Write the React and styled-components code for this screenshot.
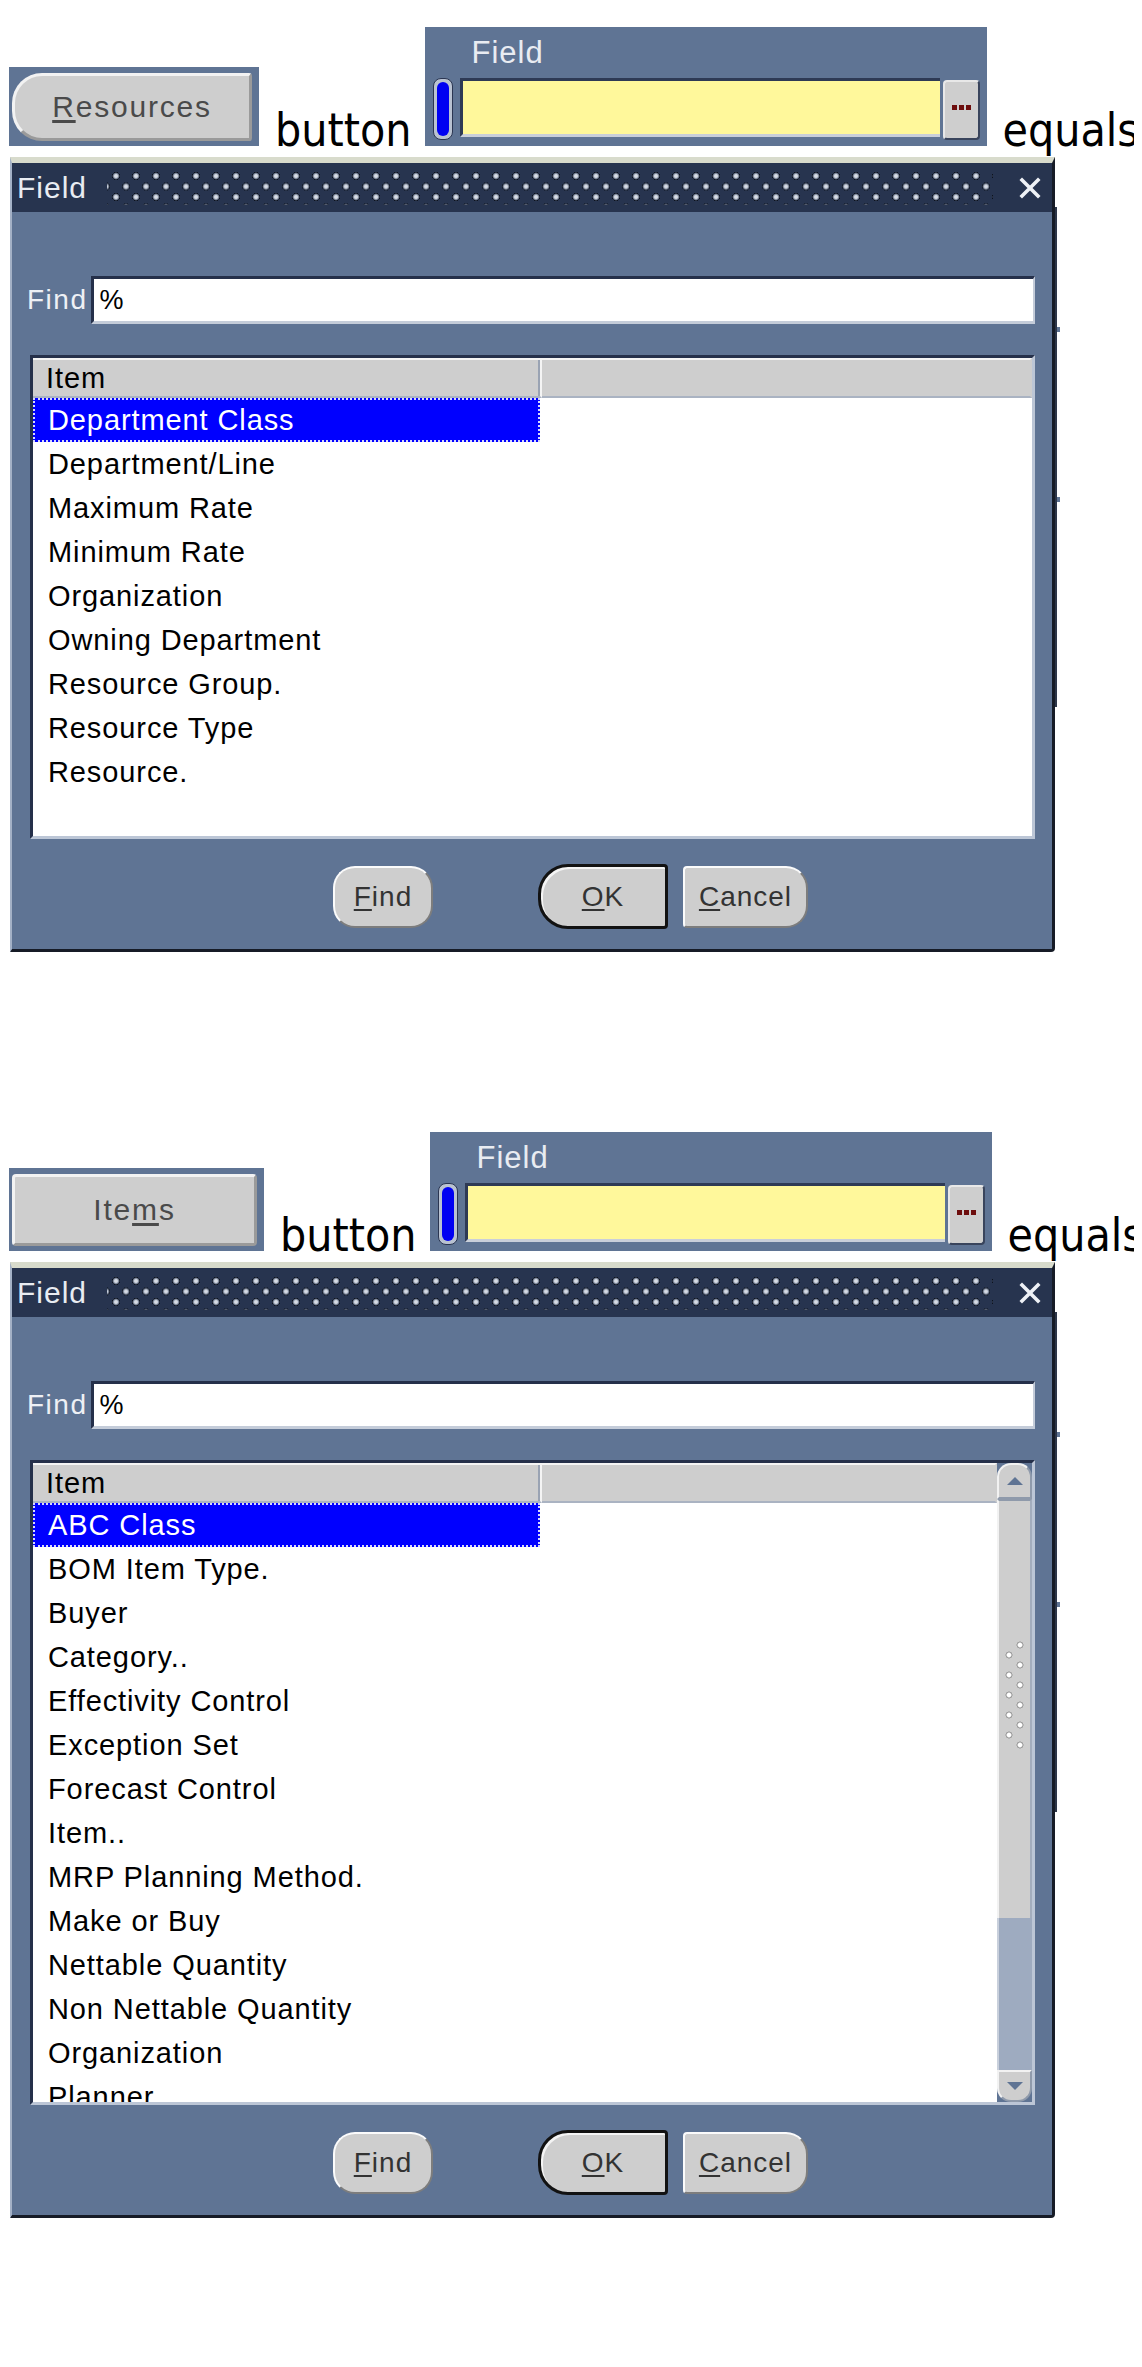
import React from "react"
import styled, { createGlobalStyle } from "styled-components"

const GlobalStyle = createGlobalStyle`
  body {
    margin: 8px;
    background: #ffffff;
    overflow-x: hidden;
  }
`

const FORMS_FONT = `"Liberation Sans", Arial, sans-serif`
const SLATE = "#5f7494"
const NAVY = "#27344f"
const FACE = "#cecece"

const resourceFields = [
    "Department Class",
    "Department/Line",
    "Maximum Rate",
    "Minimum Rate",
    "Organization",
    "Owning Department",
    "Resource Group.",
    "Resource Type",
    "Resource.",
]

const itemFields = [
    "ABC Class",
    "BOM Item Type.",
    "Buyer",
    "Category..",
    "Effectivity Control",
    "Exception Set",
    "Forecast Control",
    "Item..",
    "MRP Planning Method.",
    "Make or Buy",
    "Nettable Quantity",
    "Non Nettable Quantity",
    "Organization",
    "Planner",
]

function FieldWidget() {
    return (
        <FieldFrame>
            <FieldBox>
                <FieldLabel>Field</FieldLabel>
                <FieldControls>
                    <Indicator><span /></Indicator>
                    <YellowInput />
                    <LovButton>
                        <i /><i /><i />
                    </LovButton>
                </FieldControls>
            </FieldBox>
        </FieldFrame>
    )
}

function CloseIcon() {
    return (
        <svg width="24" height="24" viewBox="0 0 24 24">
            <path d="M4 4 L20 20 M20 4 L4 20" stroke="#eef1f6" strokeWidth="3.6" strokeLinecap="square" />
        </svg>
    )
}

function Scrollbar() {
    return (
        <ScrollTrack>
            <ScrollArrow $up>
                <svg width="18" height="10" viewBox="0 0 18 10"><path d="M9 1 L17 9 L1 9 Z" fill="#5f7494" /></svg>
            </ScrollArrow>
            <Thumb><Grip /></Thumb>
            <TrackRest />
            <ScrollArrow>
                <svg width="18" height="10" viewBox="0 0 18 10"><path d="M1 1 L17 1 L9 9 Z" fill="#5f7494" /></svg>
            </ScrollArrow>
        </ScrollTrack>
    )
}

function LovDialog({ items, listHeight, scroll }) {
    return (
        <DialogWrap>
            <Dialog>
                <TitleBar>
                    <Title>Field</Title>
                    <TitleDots />
                    <CloseIcon />
                </TitleBar>
                <DialogBody>
                    <FindRow>
                        <FindLabel>Find</FindLabel>
                        <FindInput>%</FindInput>
                    </FindRow>
                    <ListBox $h={listHeight}>
                        <ListColumns>
                            <HeaderRow>
                                <HeaderCell $main>Item</HeaderCell>
                                <HeaderCell />
                            </HeaderRow>
                            {items.map((e, i) => <ListRow key={i} $selected={i === 0}>{e}</ListRow>)}
                        </ListColumns>
                        {scroll && <Scrollbar />}
                    </ListBox>
                    <ButtonRow>
                        <DialogButton $kind="pill"><u>F</u>ind</DialogButton>
                        <DialogButton $kind="default"><u>O</u>K</DialogButton>
                        <DialogButton $kind="right"><u>C</u>ancel</DialogButton>
                    </ButtonRow>
                </DialogBody>
            </Dialog>
            <WindowBehind />
        </DialogWrap>
    )
}

export default function App() {
    return (
        <>
            <GlobalStyle />
            <Section>
                <TopLine $pad={19}>
                    <ActionButton $w={250} $h={79}>
                        <ButtonFace $round><u>R</u>esources</ButtonFace>
                    </ActionButton>
                    <Word>button</Word>
                    <FieldWidget />
                    <Word>equals</Word>
                </TopLine>
                <LovDialog items={resourceFields} listHeight={484} />
            </Section>
            <Section>
                <TopLine $pad={180}>
                    <ActionButton $w={255} $h={83}>
                        <ButtonFace>Ite<u>m</u>s</ButtonFace>
                    </ActionButton>
                    <Word>button</Word>
                    <FieldWidget />
                    <Word>equals</Word>
                </TopLine>
                <LovDialog items={itemFields} listHeight={645} scroll />
            </Section>
        </>
    )
}

const Section = styled.section`
    display: block;
`

const TopLine = styled.div`
    padding-top: ${props => props.$pad}px;
    white-space: nowrap;
    font-family: "DejaVu Sans Condensed", "DejaVu Sans", sans-serif;
    font-stretch: condensed;
    font-size: 46px;
    color: #000000;
`

const Word = styled.span`
    margin: 0 13px 0 16px;
`

const ActionButton = styled.div`
    display: inline-block;
    vertical-align: baseline;
    overflow: hidden;
    box-sizing: border-box;
    width: ${props => props.$w}px;
    height: ${props => props.$h}px;
    margin-left: 1px;
    padding: 6px 7px 5px 3px;
    background: ${SLATE};
`

const ButtonFace = styled.div`
    box-sizing: border-box;
    height: 100%;
    display: flex;
    align-items: center;
    justify-content: center;
    background: ${FACE};
    border: 3px solid;
    border-color: #f2f2f2 #9a9a9a #9a9a9a #f2f2f2;
    border-radius: ${props => props.$round ? "30px 3px 3px 30px" : "4px"};
    font-family: ${FORMS_FONT};
    font-size: 30px;
    letter-spacing: 1.8px;
    color: #4a4a4a;
    u { text-underline-offset: 3px; }
`

const FieldFrame = styled.div`
    display: inline-block;
    vertical-align: baseline;
    overflow: hidden;
    width: 562px;
    height: 119px;
    background: ${SLATE};
`

const FieldBox = styled.div`
    box-sizing: border-box;
    height: 100%;
    display: flex;
    flex-direction: column;
    padding: 0 7px 6px 8px;
`

const FieldLabel = styled.div`
    height: 51px;
    display: flex;
    align-items: center;
    padding-left: 39px;
    font-family: ${FORMS_FONT};
    font-size: 31px;
    letter-spacing: 1px;
    color: #e9ecf2;
`

const FieldControls = styled.div`
    flex: 1;
    display: flex;
    align-items: stretch;
`

const Indicator = styled.div`
    box-sizing: border-box;
    width: 20px;
    padding: 3px;
    border-radius: 8px;
    background: #b9c2d1;
    border: 1px solid #2b3652;
    span {
        display: block;
        height: 100%;
        border-radius: 6px;
        background: #0000f2;
    }
`

const YellowInput = styled.div`
    box-sizing: border-box;
    width: 480px;
    margin: 0 3px 3px 7px;
    background: #fff89b;
    border-top: 3px solid #2e3a55;
    border-left: 3px solid #2e3a55;
    border-bottom: 3px solid #c9cfda;
`

const LovButton = styled.div`
    box-sizing: border-box;
    width: 37px;
    margin-top: 2px;
    display: flex;
    align-items: center;
    justify-content: center;
    gap: 2px;
    padding-bottom: 6px;
    background: ${FACE};
    border: 2px solid;
    border-color: #e8e8e8 #39445c #39445c #e8e8e8;
    border-radius: 4px;
    i {
        width: 5px;
        height: 5px;
        background: #6d0d0d;
    }
`

const DialogWrap = styled.div`
    display: flex;
    align-items: flex-start;
`

const Dialog = styled.div`
    box-sizing: border-box;
    width: 1045px;
    margin-left: 2px;
    background: ${SLATE};
    border-top: 6px solid #d8dbcc;
    border-left: 2px solid #a4b1c6;
    border-right: 3px solid #161b26;
    border-bottom: 3px solid #161b26;
    border-bottom-right-radius: 4px;
`

/* edge of the form window that sits behind the list dialog */
const WindowBehind = styled.div`
    width: 3px;
    height: 500px;
    margin-top: 50px;
    border-left: 2px solid #2c3548;
    background: linear-gradient(#ffffff 0 120px, #5f7494 120px 125px, #ffffff 125px 290px, #5f7494 290px 295px, #ffffff 295px);
`

const TitleBar = styled.div`
    height: 49px;
    display: flex;
    align-items: center;
    padding: 0 10px 0 5px;
    background: ${NAVY};
`

const Title = styled.div`
    font-family: ${FORMS_FONT};
    font-size: 30px;
    letter-spacing: 1px;
    color: #e9ecf2;
`

const TitleDots = styled.div`
    flex: 1;
    height: 34px;
    margin: 0 25px 0 20px;
    background-image:
        radial-gradient(circle at 9px 9px, #d6dbe4 0 1.4px, #8d97a9 2.4px, #4a5468 3.2px, #0b111d 3.8px, transparent 4.2px),
        radial-gradient(circle at 9px 9px, #d6dbe4 0 1.4px, #8d97a9 2.4px, #4a5468 3.2px, #0b111d 3.8px, transparent 4.2px);
    background-size: 20px 21px;
    background-position: 0 -4px, 10px 6.5px;
`

const DialogBody = styled.div`
    padding: 64px 17px 20px 18px;
`

const FindRow = styled.div`
    display: flex;
    align-items: center;
    gap: 4px;
    margin-left: -3px;
    height: 48px;
`

const FindLabel = styled.div`
    font-family: ${FORMS_FONT};
    font-size: 28px;
    letter-spacing: 1.5px;
    color: #eef0f5;
`

const FindInput = styled.div`
    flex: 1;
    box-sizing: border-box;
    height: 48px;
    display: flex;
    align-items: center;
    padding-left: 5px;
    background: #ffffff;
    border-top: 3px solid #25304a;
    border-left: 3px solid #25304a;
    border-bottom: 3px solid #c4ccd9;
    border-right: 2px solid #c4ccd9;
    font-family: ${FORMS_FONT};
    font-size: 27px;
    color: #000000;
`

const ListBox = styled.div`
    box-sizing: border-box;
    height: ${props => props.$h}px;
    margin-top: 31px;
    display: flex;
    overflow: hidden;
    background: #ffffff;
    border-top: 3px solid #25304a;
    border-left: 3px solid #25304a;
    border-bottom: 3px solid #bcc6d6;
    border-right: 3px solid #bcc6d6;
`

const ListColumns = styled.div`
    flex: 1;
    overflow: hidden;
`

const HeaderRow = styled.div`
    display: flex;
    height: 40px;
`

const HeaderCell = styled.div`
    box-sizing: border-box;
    ${props => props.$main ? "width: 509px;" : "flex: 1;"}
    display: flex;
    align-items: center;
    padding-left: 13px;
    background: ${FACE};
    border-top: 2px solid #f4f4f4;
    border-right: 2px solid ${props => props.$main ? "#f4f4f4" : "#cecece"};
    border-bottom: 2px solid #aab3c2;
    box-shadow: ${props => props.$main ? "inset -2px 0 0 #9aa3b3" : "none"};
    font-family: ${FORMS_FONT};
    font-size: 29px;
    letter-spacing: 0.9px;
    color: #000000;
`

const ListRow = styled.div`
    box-sizing: border-box;
    width: 507px;
    height: 44px;
    display: flex;
    align-items: center;
    padding-left: 13px;
    background: ${props => props.$selected ? "#0000ff" : "transparent"};
    border: 2px dotted ${props => props.$selected ? "#d8d8ff" : "transparent"};
    font-family: ${FORMS_FONT};
    font-size: 29px;
    letter-spacing: 0.9px;
    color: ${props => props.$selected ? "#ffffff" : "#000000"};
`

const ScrollTrack = styled.div`
    width: 35px;
    display: flex;
    flex-direction: column;
    background: ${SLATE};
`

const ScrollArrow = styled.div`
    box-sizing: border-box;
    height: ${props => props.$up ? 36 : 32}px;
    display: flex;
    align-items: center;
    justify-content: center;
    background: ${FACE};
    border: 2px solid;
    border-color: #f2f2f2 #8f9aab #8f9aab #f2f2f2;
    border-radius: ${props => props.$up ? "14px 14px 0 0" : "0 0 14px 14px"};
`

const Thumb = styled.div`
    box-sizing: border-box;
    height: 419px;
    display: flex;
    align-items: center;
    justify-content: center;
    background: ${FACE};
    border-left: 2px solid #f2f2f2;
    border-right: 2px solid #a3adbd;
    border-top: 2px solid #8f9aab;
`

const Grip = styled.div`
    width: 22px;
    height: 110px;
    margin-top: -28px;
    background-image:
        radial-gradient(circle at 16px 4px, #ffffff 0 1.8px, #a8a8a8 2.8px, #808080 3.2px, transparent 3.7px),
        radial-gradient(circle at 5px 14px, #ffffff 0 1.8px, #a8a8a8 2.8px, #808080 3.2px, transparent 3.7px);
    background-size: 22px 20px;
`

const TrackRest = styled.div`
    flex: 1;
    background: #9eabc0;
    border-left: 2px solid #c9d0dc;
`

const ButtonRow = styled.div`
    display: flex;
    align-items: center;
    height: 65px;
    margin-top: 25px;
    padding-left: 303px;
`

const shapes = {
    pill: `
        width: 100px;
        height: 62px;
        border-radius: 22px;
        border-color: #fbfbfb #7d7d7d #7d7d7d #fbfbfb;
        border-width: 2px;
    `,
    default: `
        width: 130px;
        height: 65px;
        margin-left: 105px;
        border-radius: 30px 4px 4px 30px;
        border-color: #121212;
        border-width: 3px;
        box-shadow: inset 2px 2px 0 #f4f4f4;
    `,
    right: `
        width: 125px;
        height: 62px;
        margin-left: 15px;
        border-radius: 4px 22px 22px 4px;
        border-color: #fbfbfb #7d7d7d #7d7d7d #fbfbfb;
        border-width: 2px;
    `,
}

const DialogButton = styled.div`
    box-sizing: border-box;
    display: flex;
    align-items: center;
    justify-content: center;
    background: ${FACE};
    border-style: solid;
    ${props => shapes[props.$kind]}
    font-family: ${FORMS_FONT};
    font-size: 28px;
    letter-spacing: 1px;
    color: #333333;
    u { text-underline-offset: 3px; }
`
